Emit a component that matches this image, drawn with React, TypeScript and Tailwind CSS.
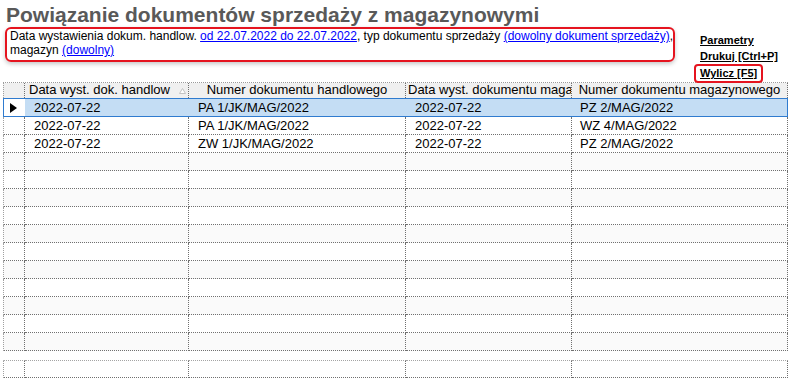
const rows = [
  ["2022-07-22", "PA 1/JK/MAG/2022", "2022-07-22", "PZ 2/MAG/2022"],
  ["2022-07-22", "PA 1/JK/MAG/2022", "2022-07-22", "WZ 4/MAG/2022"],
  ["2022-07-22", "ZW 1/JK/MAG/2022", "2022-07-22", "PZ 2/MAG/2022"],
];

const TOTAL_ROWS = 14;

function SortMark() {
  return (
    <svg width="7" height="6" viewBox="0 0 7 6" className="shrink-0">
      <path d="M3.5 0.5 L6.5 5.5 L0.5 5.5 Z" fill="#fff" stroke="#c4c4c4" strokeWidth="1" />
    </svg>
  );
}

function Header() {
  const cell = "h-[15px] border-r border-dotted border-[#707070] bg-[#f0f0f0] whitespace-nowrap overflow-hidden leading-[14px]";
  return (
    <div className="flex border-t border-dotted border-[#9a9a9a]">
      <div className={`${cell} w-[22px] border-l border-l-[#a0a0a0]`} />
      <div className={`${cell} w-[164px] flex items-start justify-between pl-[4px] pr-[2px]`}>
        <span>Data wyst. dok. handlow</span>
        <span className="mt-[5px]">
          <SortMark />
        </span>
      </div>
      <div className={`${cell} w-[217px] text-center`}>Numer dokumentu handlowego</div>
      <div className={`${cell} w-[166px] pl-[2px]`}>Data wyst. dokumentu magazynowego</div>
      <div className={`${cell} w-[216px] text-center`}>Numer dokumentu magazynowego</div>
    </div>
  );
}

function SelectedRow({ data }: { data: string[] }) {
  const cell = "h-[17px] leading-[17px] whitespace-nowrap overflow-hidden";
  return (
    <div className="flex w-[785px] border border-[#2f7bcf]">
      <div className={`${cell} w-[21px] bg-white flex items-center pl-[6px]`}>
        <svg width="7" height="10" viewBox="0 0 7 10">
          <path d="M0 0 L7 5 L0 10 Z" fill="#000" />
        </svg>
      </div>
      <div className="flex flex-1 bg-[#c4ddf4]">
        <div className={`${cell} w-[164px] pl-[9px]`}>{data[0]}</div>
        <div className={`${cell} w-[217px] pl-[9px]`}>{data[1]}</div>
        <div className={`${cell} w-[166px] pl-[9px]`}>{data[2]}</div>
        <div className={`${cell} w-[215px] pl-[8px]`}>{data[3]}</div>
      </div>
    </div>
  );
}

function Row({ data, shade, top }: { data?: string[]; shade?: boolean; top?: boolean }) {
  const cell = `h-[18px] leading-[17px] border-r border-b border-dotted border-[#707070] whitespace-nowrap overflow-hidden ${
    top ? "border-t border-t-[#a4a4a4]" : ""
  } ${shade ? "bg-[#fafafa]" : "bg-white"}`;
  return (
    <div className="flex">
      <div className={`${cell} w-[22px] border-l border-l-[#a0a0a0]`} />
      <div className={`${cell} w-[164px] pl-[9px]`}>{data?.[0]}</div>
      <div className={`${cell} w-[217px] pl-[9px]`}>{data?.[1]}</div>
      <div className={`${cell} w-[166px] pl-[9px]`}>{data?.[2]}</div>
      <div className={`${cell} w-[216px] pl-[8px]`}>{data?.[3]}</div>
    </div>
  );
}

export default function App() {
  const link = "text-[#0000ff] underline";
  return (
    <div className="w-[792px] h-[381px] bg-white overflow-hidden text-[12px] text-black [font-family:'Liberation_Sans',Arial,sans-serif]">
      <h1 className="pt-[3px] pl-[6px] text-[21px] leading-[24px] font-bold text-[#595959] whitespace-nowrap">
        Powiązanie dokumentów sprzedaży z magazynowymi
      </h1>

      <div className="flex h-[55px]">
        <div className="ml-[5px] w-[670px] h-[35px] rounded-[6px] border-2 border-[#e5141f] pl-[3px] leading-[14px] shadow-[0_2px_4px_rgba(0,0,0,0.22)]">
          <div className="whitespace-nowrap">
            Data wystawienia dokum. handlow. <span className={link}>od 22.07.2022 do 22.07.2022</span>, typ
            dokumentu sprzedaży <span className={link}>(dowolny dokument sprzedaży)</span>,
          </div>
          <div>
            magazyn <span className={link}>(dowolny)</span>
          </div>
        </div>

        <div className="ml-[25px] pt-[5px] flex flex-col items-start text-[11px] font-bold leading-[16px]">
          <span className="underline">Parametry</span>
          <span className="underline">Drukuj [Ctrl+P]</span>
          <span className="-ml-[6px] rounded-[4px] border-2 border-[#e5141f] px-[4px] pb-[1px] leading-[14px]">
            <span className="underline">Wylicz [F5]</span>
          </span>
        </div>
      </div>

      <div className="ml-[3px] w-[785px] text-[13px]">
        <Header />
        <SelectedRow data={rows[0]} />
        {Array.from({ length: TOTAL_ROWS - 1 }, (_, k) => {
          const i = k + 1;
          return <Row key={i} data={rows[i]} shade={i >= 3 && i % 2 === 1} />;
        })}
        <div className="h-[9px]" />
        <Row top />
      </div>
    </div>
  );
}
